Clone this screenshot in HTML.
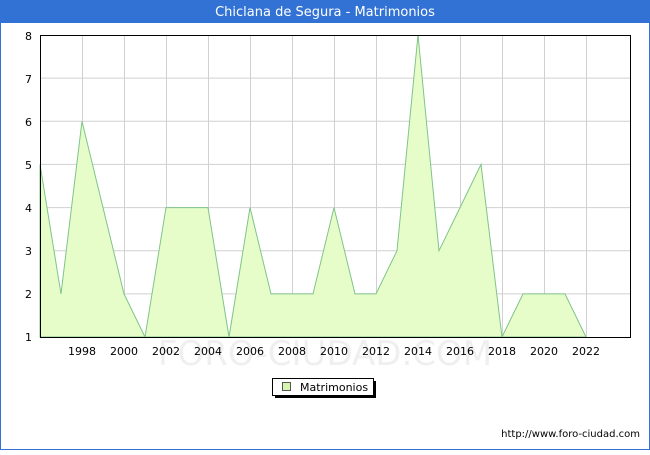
<!DOCTYPE html><html><head><style>body{margin:0;width:650px;height:450px;overflow:hidden;background:#fff;font-family:"Liberation Sans","DejaVu Sans",sans-serif}</style></head><body>
<svg width="650" height="450" xmlns="http://www.w3.org/2000/svg" font-family="DejaVu Sans, Liberation Sans, sans-serif">
<rect x="0.5" y="0.5" width="649" height="449" fill="#fff" stroke="#3272d4"/>
<rect x="0" y="0" width="650" height="23" fill="#3272d4"/>
<text x="325" y="16" fill="#fff" font-size="13" text-anchor="middle">Chiclana de Segura - Matrimonios</text>
<g stroke="#d0d0d0" stroke-width="1">
<line x1="40" y1="78.1" x2="630" y2="78.1"/><line x1="40" y1="121.3" x2="630" y2="121.3"/><line x1="40" y1="164.4" x2="630" y2="164.4"/><line x1="40" y1="207.6" x2="630" y2="207.6"/><line x1="40" y1="250.7" x2="630" y2="250.7"/><line x1="40" y1="293.9" x2="630" y2="293.9"/>
<line x1="82.5" y1="35" x2="82.5" y2="337"/><line x1="124.5" y1="35" x2="124.5" y2="337"/><line x1="166.5" y1="35" x2="166.5" y2="337"/><line x1="208.5" y1="35" x2="208.5" y2="337"/><line x1="250.5" y1="35" x2="250.5" y2="337"/><line x1="292.5" y1="35" x2="292.5" y2="337"/><line x1="334.5" y1="35" x2="334.5" y2="337"/><line x1="376.5" y1="35" x2="376.5" y2="337"/><line x1="418.5" y1="35" x2="418.5" y2="337"/><line x1="460.5" y1="35" x2="460.5" y2="337"/><line x1="502.5" y1="35" x2="502.5" y2="337"/><line x1="544.5" y1="35" x2="544.5" y2="337"/><line x1="586.5" y1="35" x2="586.5" y2="337"/>
</g>
<text x="325" y="365" font-size="34" fill="#eeeeee" text-anchor="middle" opacity="0.9">FORO-CIUDAD.COM</text>
<polygon fill="#e6fdc9" stroke="#7fc48a" stroke-width="1" points="40,337 40,164.4 61,293.9 82,121.3 103,207.6 124,293.9 145,337 166,207.6 187,207.6 208,207.6 229,337 250,207.6 271,293.9 292,293.9 313,293.9 334,207.6 355,293.9 376,293.9 397,250.7 418,35 439,250.7 460,207.6 481,164.4 502,337 523,293.9 544,293.9 565,293.9 586,337"/>
<rect x="40.5" y="35.5" width="590" height="302" fill="none" stroke="#000"/>
<g font-size="11" fill="#000" text-anchor="end">
<text x="32" y="40">8</text><text x="32" y="83">7</text><text x="32" y="126">6</text><text x="32" y="169">5</text><text x="32" y="212">4</text><text x="32" y="255">3</text><text x="32" y="298">2</text><text x="32" y="341">1</text>
</g>
<g font-size="11" fill="#000" text-anchor="middle">
<text x="82" y="355">1998</text><text x="124" y="355">2000</text><text x="166" y="355">2002</text><text x="208" y="355">2004</text><text x="250" y="355">2006</text><text x="292" y="355">2008</text><text x="334" y="355">2010</text><text x="376" y="355">2012</text><text x="418" y="355">2014</text><text x="460" y="355">2016</text><text x="502" y="355">2018</text><text x="544" y="355">2020</text><text x="586" y="355">2022</text>
</g>
<rect x="275" y="381" width="101" height="17" fill="#000"/>
<rect x="272.5" y="378.5" width="101" height="17" fill="#fff" stroke="#000"/>
<rect x="282.5" y="382.5" width="8" height="8" fill="#d5f5b0" stroke="#555"/>
<text x="300" y="391" font-size="11">Matrimonios</text>
<text x="640" y="437" font-size="10" text-anchor="end">http://www.foro-ciudad.com</text>
</svg>
</body></html>
